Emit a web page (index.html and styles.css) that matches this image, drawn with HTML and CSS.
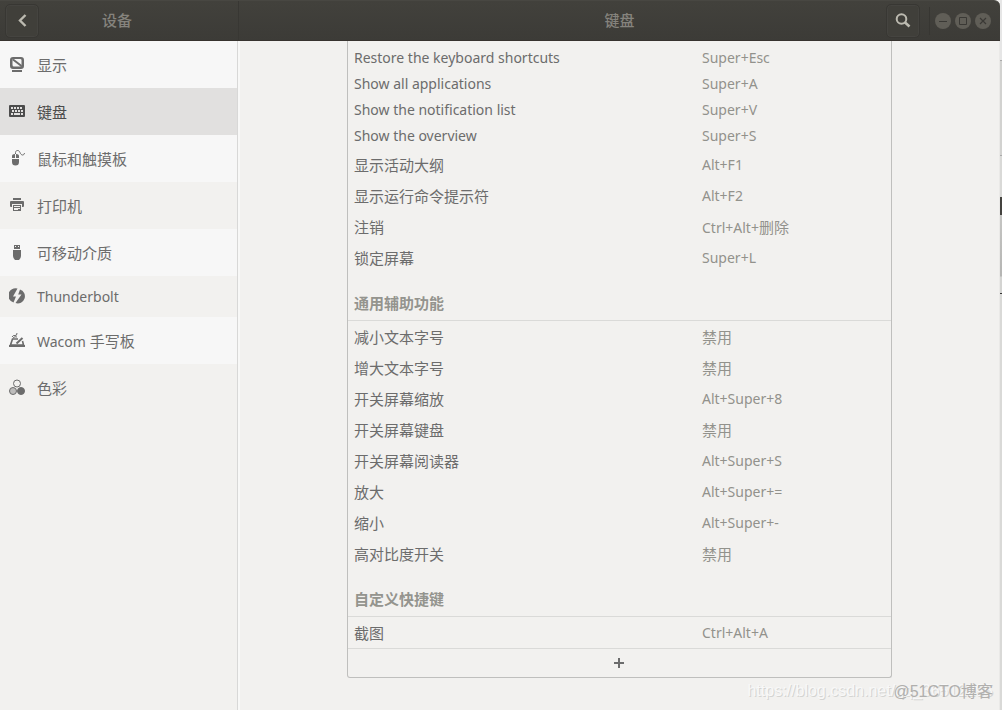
FILE: index.html
```
<!DOCTYPE html>
<html lang="zh-CN">
<head>
<meta charset="utf-8">
<title>设备 - 键盘</title>
<link rel="stylesheet" href="styles.css">
</head>
<body>
<div class="window">
  <header class="titlebar">
    <div class="titlebar-side">
      <button class="header-button" type="button" aria-label="返回"><svg width="16" height="16" viewBox="0 0 16 16"><path d="M11.500 2 6 7.500l5.500 5.500" fill="none" stroke="currentColor" stroke-width="2.400"/></svg></button>
      <h1 class="title title-side">设备</h1>
    </div>
    <div class="titlebar-main">
      <h2 class="title title-main">键盘</h2>
      <button class="header-button" type="button" aria-label="搜索"><svg width="16" height="16" viewBox="0 0 16 16" fill="none" stroke="currentColor"><circle cx="6.5" cy="6" r="4.800" stroke-width="2"/><path d="m9.500 9 5 4.500" stroke-width="2.600"/></svg></button>
      <span class="separator"></span>
      <div class="window-buttons">
        <button class="window-button" type="button" aria-label="最小化"><svg width="16" height="16" viewBox="0 0 16 16"><path d="M4 8.5h8" stroke="currentColor"/></svg></button>
        <button class="window-button" type="button" aria-label="最大化"><svg width="16" height="16" viewBox="0 0 16 16"><path d="M4.500 4.500h7v7h-7z" fill="none" stroke="currentColor"/></svg></button>
        <button class="window-button" type="button" aria-label="关闭"><svg width="16" height="16" viewBox="0 0 16 16"><path d="m5 5 6 6m0-6-6 6" stroke="currentColor" stroke-width="1.200"/></svg></button>
      </div>
    </div>
  </header>
  <div class="body">
    <nav class="sidebar">
      <a class="nav-item" href="#display"><svg class="nav-icon" viewBox="0 0 16 16"><path fill-rule="evenodd" d="M4 1h8q3 0 3 3v6q0 3-3 3H4q-3 0-3-3V4q0-3 3-3zm1 2q-1.500 0-1.500 1v5q0 1.500 1.500 1.500h6q1.500 0 1.500-1.500V4q0-1-1.500-1z" fill="currentColor"/><path d="m4 3.500 8.500 6.500" stroke="currentColor" stroke-width="2"/><path d="M3 15h10" stroke="currentColor" stroke-width="2"/></svg><span>显示</span></a>
      <a class="nav-item selected" href="#keyboard" aria-current="page"><svg class="nav-icon" viewBox="0 0 16 16"><path fill-rule="evenodd" d="M1 2h14q1 0 1 1v10q0 1-1 1H1q-1 0-1-1V3q0-1 1-1zm1 2v2h2V4zm3 0v2h2V4zm3 0v2h2V4zm3 0v2h2V4zM3 7v2h2V7zm3 0v2h2V7zm3 0v2h2V7zm3 0v2h2V7zM2 10v2h2v-2zm3 0v2h6v-2zm7 0v2h2v-2z" fill="currentColor"/></svg><span>键盘</span></a>
      <a class="nav-item" href="#mouse"><svg class="nav-icon" viewBox="0 0 16 16"><path d="M3 8V6q0-2 3-2v4zm4 0V4q3 0 3 2v2zM3 9h7v3q0 3.500-3.500 3.500T3 12z" fill="currentColor"/><path d="M6.500 4C6-.5 10-.5 11 2.500S15 6 15.500 3" fill="none" stroke="currentColor"/></svg><span>鼠标和触摸板</span></a>
      <a class="nav-item alternate" href="#printers"><svg class="nav-icon" viewBox="0 0 16 16"><path d="M4 1h8v2H4zM2 4h12q1 0 1 1v4q0 1-1 1h-1V7H3v3H2q-1 0-1-1V5q0-1 1-1z" fill="currentColor"/><path fill-rule="evenodd" d="M4 8h8v6H4zm1 1v1h6V9zm0 2v1h6v-1zm0 1h4v1H5z" fill="currentColor"/></svg><span>打印机</span></a>
      <a class="nav-item" href="#media"><svg class="nav-icon" viewBox="0 0 16 16"><path fill-rule="evenodd" d="M5 1h6v4H5zm1 1v1h1V2zm3 0v1h1V2zM4 6h8v6q0 2-2 4H6q-2-2-2-4z" fill="currentColor"/></svg><span>可移动介质</span></a>
      <a class="nav-item short alternate" href="#thunderbolt"><svg class="nav-icon" viewBox="0 0 16 16"><path d="M8.500.500 4 8.500h3L4.500 14.500A7 7 0 0 1 8.500.500zM11 1.500a7 7 0 0 1-4.500 13.600L12.500 6.500H9.200z" fill="currentColor"/></svg><span class="latin">Thunderbolt</span></a>
      <a class="nav-item" href="#wacom"><svg class="nav-icon" viewBox="0 0 16 16"><path d="M9 7H3.500L1.500 13h13L13.500 9" fill="none" stroke="currentColor" stroke-width="1.600"/><path d="M0 13h16v2H0z" fill="currentColor"/><path d="m7.500 11.500 6-5.500" stroke="currentColor" stroke-width="2"/><path d="M3 5q1-2 3-1.500T8 1M4 6q2-2 4-1" fill="none" stroke="currentColor"/></svg><span><span class="latin">Wacom</span> 手写板</span></a>
      <a class="nav-item alternate" href="#color"><svg class="nav-icon" viewBox="0 0 16 16" stroke="currentColor"><circle cx="8" cy="4.500" r="3.500" fill="none"/><circle cx="4" cy="12" r="3.500" fill="#bdbcbb"/><circle cx="12" cy="12" r="3.500" fill="currentColor"/></svg><span>色彩</span></a>
    </nav>
    <main class="content">
      <div class="shortcuts">
        <table class="table">
          <colgroup><col><col class="keys-column"></colgroup>
          <tbody>
            <tr class="compact"><td class="latin">Restore the keyboard shortcuts</td><td class="latin">Super+Esc</td></tr>
            <tr class="compact"><td class="latin">Show all applications</td><td class="latin">Super+A</td></tr>
            <tr class="compact"><td class="latin">Show the notification list</td><td class="latin">Super+V</td></tr>
            <tr class="compact"><td class="latin">Show the overview</td><td class="latin">Super+S</td></tr>
            <tr><td>显示活动大纲</td><td class="latin">Alt+F1</td></tr>
            <tr><td>显示运行命令提示符</td><td class="latin">Alt+F2</td></tr>
            <tr><td>注销</td><td><span class="latin">Ctrl+Alt+</span>删除</td></tr>
            <tr><td>锁定屏幕</td><td class="latin">Super+L</td></tr>
          </tbody>
          <tbody>
            <tr class="section"><th colspan="2" scope="rowgroup">通用辅助功能</th></tr>
            <tr><td>减小文本字号</td><td>禁用</td></tr>
            <tr><td>增大文本字号</td><td>禁用</td></tr>
            <tr><td>开关屏幕缩放</td><td class="latin">Alt+Super+8</td></tr>
            <tr><td>开关屏幕键盘</td><td>禁用</td></tr>
            <tr><td>开关屏幕阅读器</td><td class="latin">Alt+Super+S</td></tr>
            <tr><td>放大</td><td class="latin">Alt+Super+=</td></tr>
            <tr><td>缩小</td><td class="latin">Alt+Super+-</td></tr>
            <tr><td>高对比度开关</td><td>禁用</td></tr>
          </tbody>
          <tbody>
            <tr class="section"><th colspan="2" scope="rowgroup">自定义快捷键</th></tr>
            <tr><td>截图</td><td class="latin">Ctrl+Alt+A</td></tr>
          </tbody>
        </table>
        <button class="add-button" type="button" aria-label="添加快捷键"><svg width="16" height="16" viewBox="0 0 16 16"><path d="M3 8h10M8 3v10" stroke="currentColor" stroke-width="2"/></svg></button>
      </div>
    </main>
  </div>
</div>
<div class="backdrop"></div>
<span class="watermark watermark-source">https://blog.csdn.net/qq_36512295</span>
<span class="watermark watermark-site">@51CTO博客</span>
</body>
</html>
```
FILE: styles.css
```
* { box-sizing: border-box; }
body {
  position: relative;
  display: flex;
  min-height: 100vh;
  margin: 0;
  background: #d9d9d7;
  color: #6c6c6c;
  font: 15px/21px "Open Sans", "Noto Sans CJK SC", sans-serif;
}
button { padding: 0; border: 0; background: none; color: inherit; font: inherit; }
svg { display: block; }
.latin { font-family: "Noto Sans", sans-serif; font-size: 14px; }
.window {
  display: flex;
  flex: 1;
  flex-direction: column;
  background: #f2f1ef;
}
.backdrop {
  width: 2px;
  background: linear-gradient(#e6e6e6 60px, #aaa 60px 61px, #d2d2d0 61px 155px, #aaa 155px 156px, #d9d9d7 156px 197px, #44433f 197px 215px, #c5c5c3 215px, #b5b5b3 276px, #d4d4d2 277px 293px, #333 293px 294px, #d9d9d7 294px);
}
.titlebar {
  display: flex;
  height: 41px;
  border-top: 1px solid #484742;
  border-bottom: 1px solid #37332f;
  border-radius: 0 6px 0 0;
  background: linear-gradient(#42413c, #3c3b37);
  color: #85837d;
}
.titlebar-side, .titlebar-main { display: flex; align-items: center; }
.titlebar-side { width: 239px; padding: 0 43px 0 5px; border-right: 1px solid #383733; }
.titlebar-main { flex: 1; padding: 0 9px 0 0; }
.title { flex: 1; margin: 0; font-size: 15px; font-weight: 500; text-align: center; }
.title-main { padding-left: 114px; }
.header-button {
  display: grid;
  place-items: center;
  width: 34px;
  height: 34px;
  border: 1px solid #383733;
  border-radius: 5px;
  background: #403f3a;
  box-shadow: inset 0 0 0 1px #454440;
  color: #bcbab0;
}
.separator { width: 1px; height: 28px; margin: 0 5px 0 9px; background: #373632; }
.window-buttons { display: flex; gap: 4px; }
.window-button {
  display: grid;
  place-items: center;
  width: 16px;
  height: 16px;
  border-radius: 50%;
  background: #605e57;
  color: #3a3935;
}
.body { display: flex; flex: 1; }
.sidebar { width: 238px; border-right: 1px solid #d8d8d7; }
.nav-item {
  display: flex;
  align-items: center;
  gap: 12px;
  height: 47px;
  padding: 0 9px;
  background: #f7f7f7;
  color: inherit;
  text-decoration: none;
}
.nav-item > span { padding-top: 2px; }
.nav-item.alternate { background: #f2f1ef; }
.nav-item.selected { background: #e1e0df; color: #4c4c4c; }
.nav-item.short { height: 41px; }
.nav-item.short > span { padding-top: 0; }
.nav-icon { width: 16px; height: 16px; margin-bottom: 1px; }
.content { flex: 1; padding: 0 107px 32px; border-left: 2px solid #f8f8f7; border-right: 1px solid #eae9e7; }
.shortcuts {
  padding-top: 4px;
  border: 1px solid #bfbfbd;
  border-top: 0;
  border-radius: 0 0 3px 3px;
}
.table { width: 100%; border-collapse: separate; border-spacing: 0; table-layout: fixed; }
.keys-column { width: 195px; }
.table td, .table th { padding: 2px 6px 0; text-align: left; }
.table td { height: 31px; }
.table td:last-child { color: #92928c; }
.table td.latin { padding-top: 0; }
.table .compact td { height: 26px; padding-bottom: 2px; }
.table .section th {
  height: 48px;
  padding-top: 14px;
  border-bottom: 1px solid #dadad8;
  color: #94948e;
  font-weight: 700;
}
.add-button {
  display: grid;
  place-items: center;
  width: 100%;
  height: 29px;
  padding-right: 1px;
  border-top: 1px solid #dadad8;
}
.watermark { position: absolute; white-space: nowrap; pointer-events: none; }
.watermark-source {
  right: 9px;
  bottom: 8px;
  color: #f8f8f8;
  font: 16px/22px "Liberation Sans", sans-serif;
  text-shadow: 1px 1px 0 #d4d4d2;
}
.watermark-site {
  right: 9px;
  bottom: 7px;
  color: #b0afad;
  font: 16px/22px "Liberation Sans", "Noto Sans CJK SC", sans-serif;
}
```
